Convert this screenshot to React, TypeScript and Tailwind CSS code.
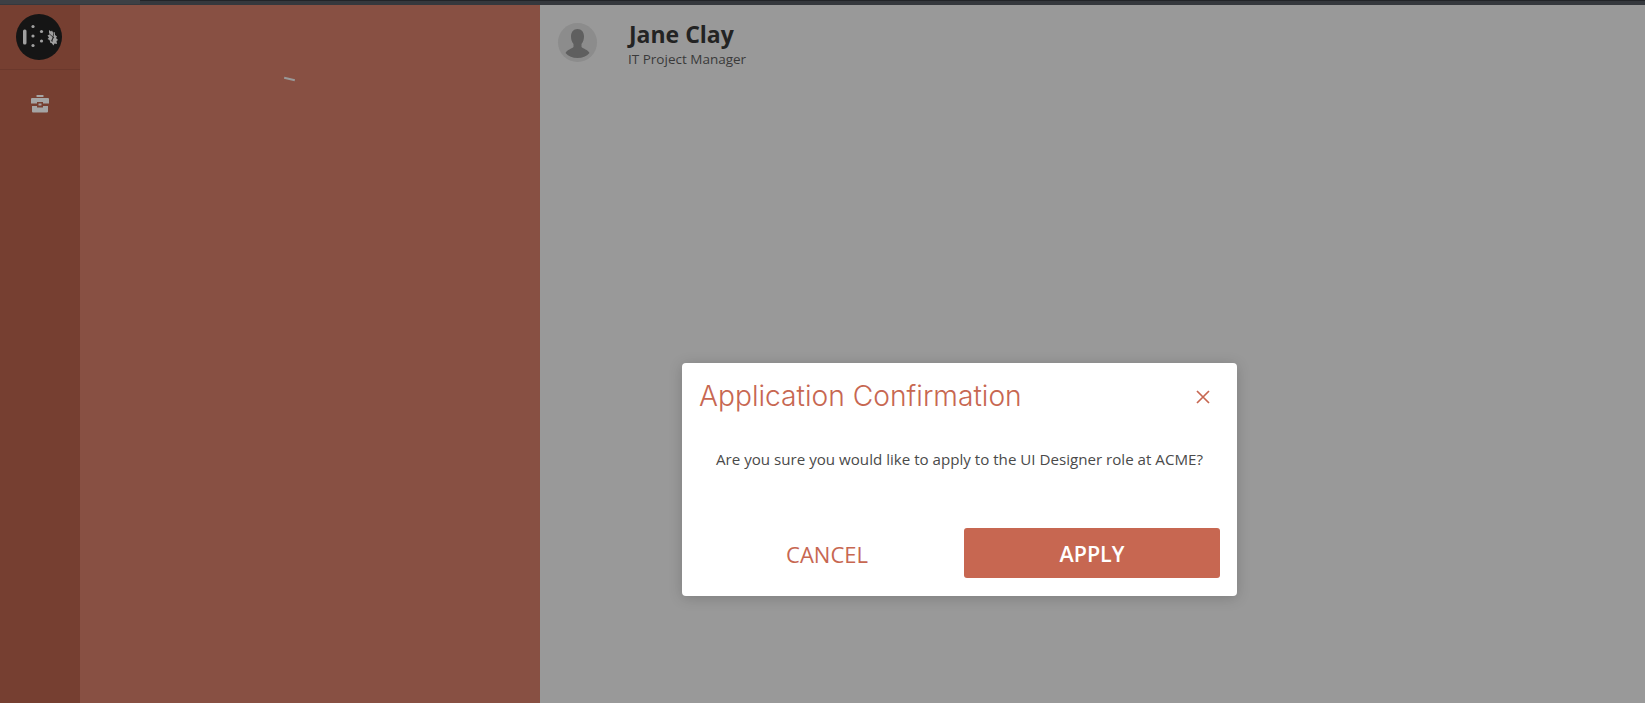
export default function App() {
  return (
    <div className="relative flex h-[703px] w-[1645px] flex-col overflow-hidden bg-[#999999] font-['Open_Sans',sans-serif]">
      <div className="flex h-[5px] shrink-0 bg-[#35383d]">
        <div className="h-[4px] w-[140px] bg-[#3d4045]" />
        <div className="h-px flex-1 bg-[#222428]" />
      </div>
      <div className="flex min-h-0 flex-1">
        <aside className="flex w-[80px] shrink-0 flex-col items-center bg-[#763f31]">
          <div className="flex h-[65px] w-full shrink-0 items-center justify-center border-b border-[#6b382c] pr-[2px]">
            <svg width="46" height="46" viewBox="0 0 46 46">
              <circle cx="23" cy="23" r="23" fill="#151515" />
              <rect x="7" y="15.5" width="3.5" height="15" rx="1.5" fill="#a0a0a0" />
              <circle cx="17" cy="12.500" r="1.600" fill="#a0a0a0" />
              <circle cx="17" cy="22" r="1.600" fill="#a0a0a0" />
              <circle cx="17" cy="31.500" r="1.600" fill="#a0a0a0" />
              <circle cx="25.500" cy="17.500" r="1.600" fill="#a0a0a0" />
              <circle cx="25.500" cy="27" r="1.600" fill="#a0a0a0" />
              <path d="M33 16l2 1.500 1-1 1 2 2-.5 0 3 2 1.500-1 1.500 2 2-1.500 1 .5 3-2.500-.5-1 2-2-2.500-1 0-1-3-2-1 1.500-1.500-1.500-2 2-1-.5-2z" fill="#a0a0a0" />
              <path d="M33.500 20l4 3.500M35 27l3-4M38 18l-2 10" stroke="#151515" strokeWidth="0.700" />
            </svg>
          </div>
          <div className="mt-[25px]">
            <svg width="20" height="18" viewBox="0 0 20 18">
              <rect x="6.500" y="0" width="7" height="2" rx="0.600" fill="#a5a5a5" />
              <path d="M2 3h16a1 1 0 0 1 1 1v4.500h-6V7H7v1.500H1V4a1 1 0 0 1 1-1z" fill="#a5a5a5" />
              <path d="M2 11h5v1.500h6V11h5v5.500a1 1 0 0 1-1 1H3a1 1 0 0 1-1-1z" fill="#a5a5a5" />
              <rect x="8.500" y="8.500" width="3" height="2" fill="#a5a5a5" />
            </svg>
          </div>
        </aside>
        <section className="relative w-[460px] shrink-0 bg-[#885043]">
          <div className="absolute left-[204px] top-[73px] h-[2px] w-[11px] rotate-[14deg] bg-[#999999]" />
        </section>
        <main className="flex flex-1 items-start pl-[18px] pt-[18px]">
          <div className="flex h-[39px] w-[39px] items-center justify-center overflow-hidden rounded-full bg-[#8c8c8c]">
            <svg width="39" height="39" viewBox="0 0 39 39">
              <path d="M19.500 6c-4 0-6.500 3-6.500 7.500 0 3 1 5.500 2.500 7.500v3c-2 2-6 2.500-8 6 3 3.500 7 5 12 5s9-1.500 12-5c-2-3.500-6-4-8-6v-3c1.500-2 2.500-4.500 2.500-7.500 0-4.500-2.500-7.500-6.500-7.500z" fill="#5f5f5f" />
            </svg>
          </div>
          <div className="ml-[32px] flex flex-col">
            <h1 className="-mt-[5px] text-[23px] font-bold leading-[32px] text-[#232323]">Jane Clay</h1>
            <p className="-ml-px text-[13.500px] leading-[18px] text-[#3a3a3a]">IT Project Manager</p>
          </div>
        </main>
      </div>
      <div className="absolute left-[682px] top-[363px] flex h-[233px] w-[555px] flex-col rounded-[4px] bg-white px-[17px] shadow-[0_2px_14px_rgba(0,0,0,0.18)]">
        <div className="flex items-start justify-between pt-[15px]">
          <h2 className="font-['Inter',sans-serif] text-[28.200px] font-light leading-[36px] text-[#c76751]">Application Confirmation</h2>
          <svg className="mr-[9px] mt-[11px]" width="16" height="16" viewBox="0 0 16 16">
            <path d="M2 2l12 12M14 2L2 14" stroke="#c76751" strokeWidth="1.700" />
          </svg>
        </div>
        <p className="mt-[35px] text-center text-[15.130px] leading-[20px] text-[#4a4a4a]">
          Are you sure you would like to apply to the UI Designer role at ACME?
        </p>
        <div className="mt-[59px] flex items-center">
          <button className="flex h-[50px] w-[265px] items-center justify-center pr-[9px] pt-[2px] text-[22px] text-[#c76751]">CANCEL</button>
          <button className="flex h-[50px] flex-1 items-center justify-center rounded-[3px] bg-[#c76751] pt-[2px] text-[21.500px] font-semibold text-white">APPLY</button>
        </div>
      </div>
    </div>
  );
}
